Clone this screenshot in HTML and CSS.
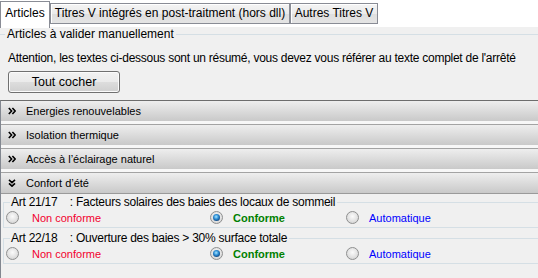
FILE: index.html
```html
<!DOCTYPE html>
<html lang="fr">
<head>
<meta charset="utf-8">
<title>Articles</title>
<link rel="stylesheet" href="styles.css">
</head>
<body>
<div class="window">
  <div class="tabstrip">
    <div class="tab active">Articles</div>
    <div class="tab t1">Titres V intégrés en post-traitment (hors dll)</div>
    <div class="tab t2">Autres Titres V</div>
  </div>
  <div class="panel">
    <fieldset class="intro">
      <legend>Articles à valider manuellement</legend>
      <p class="notice">Attention, les textes ci-dessous sont un résumé, vous devez vous référer au texte complet de l'arrêté</p>
      <button class="btn" type="button">Tout cocher</button>
    </fieldset>
    <div class="accordion">
      <div class="acc-header">
        <svg class="chev" width="8" height="8" viewBox="0 0 8 8"><path d="M0.8 1 L3.6 4 L0.8 7 M4.4 1 L7.2 4 L4.4 7" fill="none" stroke="#000" stroke-width="1.6"/></svg>
        <span>Energies renouvelables</span>
      </div>
      <div class="acc-header">
        <svg class="chev" width="8" height="8" viewBox="0 0 8 8"><path d="M0.8 1 L3.6 4 L0.8 7 M4.4 1 L7.2 4 L4.4 7" fill="none" stroke="#000" stroke-width="1.6"/></svg>
        <span>Isolation thermique</span>
      </div>
      <div class="acc-header">
        <svg class="chev" width="8" height="8" viewBox="0 0 8 8"><path d="M0.8 1 L3.6 4 L0.8 7 M4.4 1 L7.2 4 L4.4 7" fill="none" stroke="#000" stroke-width="1.6"/></svg>
        <span>Accès à l’éclairage naturel</span>
      </div>
      <div class="acc-header open">
        <svg class="chev" width="8" height="8" viewBox="0 0 8 8"><path d="M1 0.8 L4 3.6 L7 0.8 M1 4.4 L4 7.2 L7 4.4" fill="none" stroke="#000" stroke-width="1.6"/></svg>
        <span>Confort d’été</span>
      </div>
      <div class="acc-body">
        <fieldset class="article">
          <legend>Art 21/17&nbsp;&nbsp;&nbsp; : Facteurs solaires des baies des locaux de sommeil</legend>
          <div class="choices">
            <label class="choice nc"><span class="radio"></span>Non conforme</label>
            <label class="choice ok"><span class="radio checked"></span>Conforme</label>
            <label class="choice auto"><span class="radio"></span>Automatique</label>
          </div>
        </fieldset>
        <fieldset class="article">
          <legend>Art 22/18&nbsp;&nbsp;&nbsp; : Ouverture des baies &gt; 30% surface totale</legend>
          <div class="choices">
            <label class="choice nc"><span class="radio"></span>Non conforme</label>
            <label class="choice ok"><span class="radio checked"></span>Conforme</label>
            <label class="choice auto"><span class="radio"></span>Automatique</label>
          </div>
        </fieldset>
      </div>
    </div>
  </div>
</div>
</body>
</html>
```
FILE: styles.css
```css
html, body {
  margin: 0;
  padding: 0;
  overflow: hidden;
  background: #f0f0f0;
}
body {
  width: 538px;
  height: 278px;
  font-family: "Liberation Sans", Arial, sans-serif;
  font-size: 12px;
  color: #000;
}
.window {
  width: 560px;
  height: 278px;
}
.tabstrip {
  display: flex;
  align-items: flex-start;
  height: 27px;
  background: #fff;
}
.tab {
  box-sizing: border-box;
  height: 21px;
  margin-top: 3px;
  border: 1px solid #898c95;
  background: linear-gradient(#f4f4f4, #ebebeb 50%, #dedede 51%, #e4e4e4);
  box-shadow: inset 1px 1px 0 #fff;
  line-height: 18px;
  text-align: center;
  white-space: nowrap;
}
.tab.active {
  width: 50px;
  height: 27px;
  margin-top: 1px;
  border-bottom: none;
  background: #fff;
  box-shadow: none;
  line-height: 22px;
}
.tab.t1 { width: 240px; }
.tab.t2 { width: 88px; }
.panel {
  height: 251px;
  background: #f0f0f0;
}
fieldset {
  margin: 0;
  padding: 0;
  border: none;
  min-width: 0;
}
.intro {
  border-top: 1px solid #d5dfe5;
}
.intro legend {
  margin-left: 5px;
  padding: 0 2px;
  line-height: 14px;
}
.notice {
  margin: 9px 0 0 8px;
  line-height: 16px;
  white-space: nowrap;
  letter-spacing: -0.26px;
}
.btn {
  display: block;
  box-sizing: border-box;
  margin: 5px 0 0 8px;
  width: 112px;
  height: 22px;
  padding: 0;
  border: 1px solid #707070;
  border-radius: 3px;
  background: linear-gradient(#f2f2f2, #ebebeb 48%, #dddddd 52%, #cfcfcf);
  box-shadow: inset 0 0 0 1px #fbfbfb;
  font: inherit;
  font-size: 12.5px;
  color: #000;
}
.accordion {
  margin-top: 7px;
  border-left: 1px solid #828790;
  border-top: 1px solid #6d6d6d;
  background: #f7f7f7;
}
.acc-header {
  display: flex;
  align-items: center;
  height: 20px;
  margin-bottom: 3px;
  padding-left: 7px;
  background: linear-gradient(#eeeeee, #c9c9c9);
  font-size: 11px;
}
.acc-header + .acc-header {
  border-top: 1px solid #a3a3a3;
}
.acc-header.open {
  margin-bottom: 0;
  border-bottom: 1px solid #9a9a9a;
}
.chev {
  flex: none;
  margin-right: 10px;
}
.acc-body {
  padding: 2px 0 20px 2px;
  background: #f0f0f0;
}
.article {
  border: 1px solid #d5dfe5;
  border-right: none;
  margin-bottom: 4px;
}
.article legend {
  margin-left: 6px;
  padding: 0 2px 0 1px;
  line-height: 12px;
  letter-spacing: -0.25px;
}
.choices {
  display: grid;
  grid-template-columns: 204px 136px auto;
  align-items: center;
  height: 19px;
  padding-left: 2px;
}
.choice {
  display: flex;
  align-items: center;
  gap: 10px;
  font-size: 11px;
}
.choice.nc { gap: 13px; }
.nc { color: #f2002e; }
.ok { color: #008000; font-weight: bold; }
.auto { color: #0000ff; }
.radio {
  position: relative;
  flex: none;
  box-sizing: border-box;
  width: 13px;
  height: 13px;
  border: 1px solid #8e8f8f;
  border-radius: 50%;
  background: radial-gradient(circle at 50% 40%, #fbfbfb, #e2e2e2 55%, #cdcdcd);
}
.radio.checked::after {
  content: "";
  position: absolute;
  left: 2px;
  top: 2px;
  width: 7px;
  height: 7px;
  border-radius: 50%;
  background: radial-gradient(circle at 45% 40%, #a8e6ff 0, #2d8ed6 40%, #0c3b72 80%);
}
```
